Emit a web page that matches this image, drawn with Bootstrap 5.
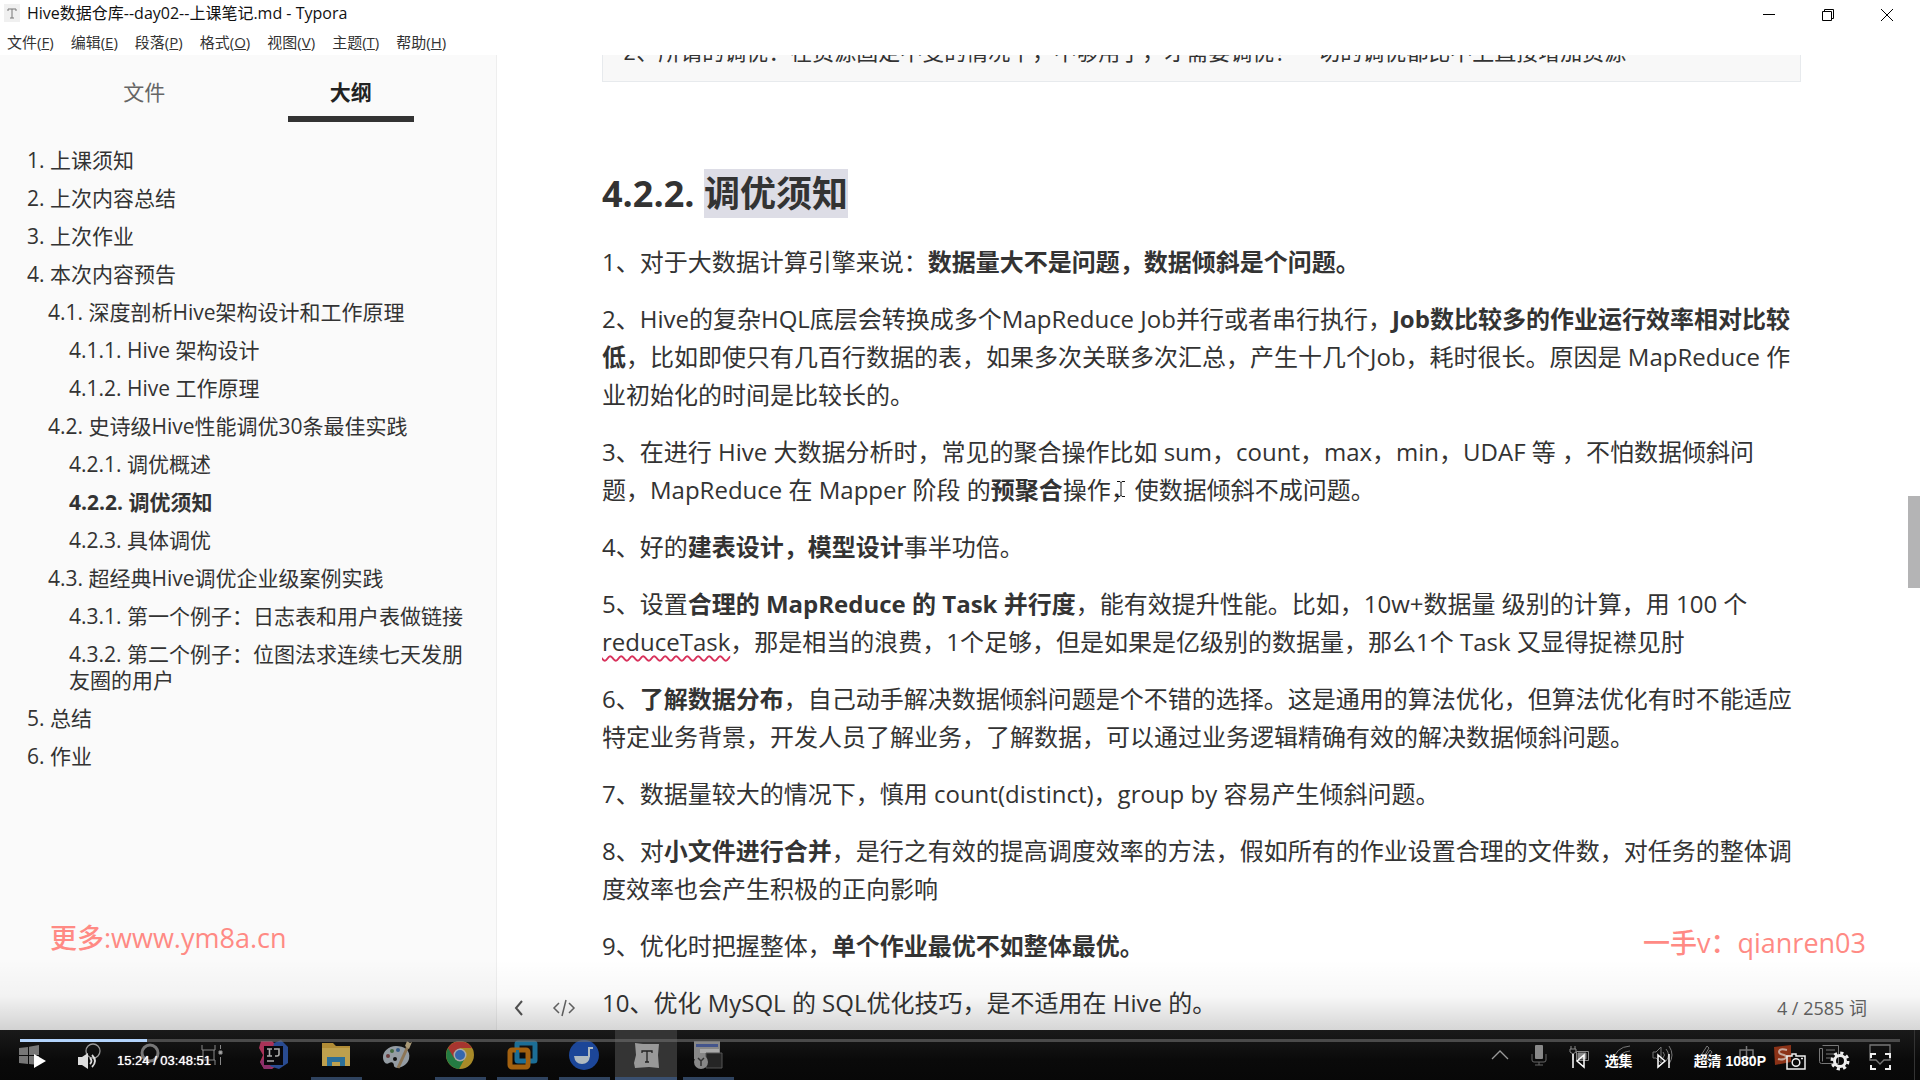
<!DOCTYPE html>
<html lang="zh-CN">
<head>
<meta charset="utf-8">
<meta name="viewport" content="width=device-width, initial-scale=1">
<title>Hive数据仓库--day02--上课笔记.md - Typora</title>
<link rel="stylesheet" href="https://cdn.jsdelivr.net/npm/bootstrap@5.3.0/dist/css/bootstrap.min.css">
<style>
  body { font-family: "Open Sans", "Noto Sans CJK SC", sans-serif; color: #333; background: #fff; }
  a, a:hover { color: inherit; text-decoration: none; }
  button { border: 0; background: none; padding: 0; color: inherit; }
  svg { display: block; overflow: visible; }
  .winbar { height: 30px; font-size: 16px; line-height: 27px; color: #111; padding-left: 4px; }
  .winbar .doc-title { margin-left: 7px; }
  .win-btn { width: 59px; height: 29px; display: grid; place-items: center; }
  .menus { height: 25px; padding-left: 7px; gap: 17px; font-size: 15px; line-height: 24px; color: #333; }
  .outline-pane { width: 497px; background: #fafafa; border-right: 1px solid #eee; }
  .pane-tabs { padding: 13px 42px 0 41px; font-size: 21px; line-height: 48px; }
  .pane-tabs button { border-bottom: 6px solid transparent; width: 126px; height: 54px; color: #666; }
  .pane-tabs button.active { border-color: #333; color: #222; font-weight: 700; }
  .toc { margin: 19px 30px 0 27px; font-size: 21px; line-height: 26px; }
  .toc li { padding: 6px 0; }
  .toc .lv2 { padding-left: 21px; }
  .toc .lv3 { padding-left: 42px; }
  .writing { padding: 0 119px 0 105px; font-size: 24px; line-height: 38px; }
  .writing p { margin: 0 0 19px; }
  .fence { height: 27px; background: #f8f8f8; border: 1px solid #e7eaed; border-top: 0; padding-left: 20px; font: 22px/30px "Liberation Mono", "Noto Sans CJK SC", monospace; }
  .fence div { margin-top: -15px; white-space: nowrap; }
  .writing h4 { margin: 85px 0 22px; font-size: 36px; line-height: 54px; font-weight: 700; }
  .picked { background: #dddde6; }
  .typo { text-decoration: underline wavy #d8315b 2px; text-underline-offset: 4px; }
  .thumb { right: 0; top: 441px; width: 12px; height: 92px; background: #b4b4b5; }
  .ibeam { left: 1117px; top: 481px; }
  .pane-foot { left: 497px; right: 53px; bottom: 55px; height: 34px; font-size: 18px; color: #666; padding-left: 17px; }
  .stamp { color: #ff8a84; font-size: 27px; line-height: 36px; font-weight: 500; white-space: nowrap; }
  .stamp-l { left: 50px; top: 920px; }
  .stamp-r { right: 54px; top: 925px; }
  .player { height: 120px; background: linear-gradient(rgba(0,0,0,0), rgba(0,0,0,.03) 30%, rgba(0,0,0,.17) 60%); }
  .deskbar { height: 50px; background: linear-gradient(#1a1a1a, #0a0a0a 60%, #080808); }
  .slot { width: 62px; display: grid; place-items: center; height: 50px; }
  .slot.first { width: 57px; }
  .slot.run { background: linear-gradient(#2f435f, #2f435f) center bottom / 51px 3px no-repeat; }
  .slot.now { background: linear-gradient(#3a5070, #3a5070) center bottom / 62px 3px no-repeat, #343434; }
  .tray > span { height: 50px; display: grid; place-items: center; }
  .w38 { width: 38px; } .w40 { width: 40px; } .w42 { width: 42px; } .w46 { width: 46px; } .w34 { width: 34px; } .w56 { width: 56px; }
  .desk-edge { width: 6px; margin-left: 11px; border-left: 1px solid #333; }
  .ctrls { height: 44px; padding: 6px 29px 0 33px; color: #fff; font: 14px/20px "Liberation Sans", "Noto Sans CJK SC", sans-serif; }
  .seek { left: 20px; right: 20px; bottom: 38px; height: 3px; border-radius: 0; background: rgba(110,110,110,.6); }
  .seek .progress-bar { background: #b3d4fc; }
  .clock { margin-left: 19px; font-size: 13px; text-shadow: 0 0 1px #fff; }
  .gap-a { margin-left: 20px; }
</style>
</head>
<body class="vh-100 overflow-hidden position-relative d-flex flex-column">
<header>
  <div class="winbar d-flex">
    <svg class="mt-1" width="16" height="18" viewBox="0 0 16 18"><rect width="16" height="18" fill="#f0f0f0"/><path d="M4 7V5h8v2M8 5v9M6 14h4" fill="none" stroke="#777"/></svg>
    <span class="doc-title me-auto">Hive数据仓库--day02--上课笔记.md - Typora</span>
    <button class="win-btn" aria-label="最小化"><svg width="12" height="12"><path d="M0 5.500h12" stroke="#000"/></svg></button>
    <button class="win-btn" aria-label="还原"><svg width="12" height="12" fill="none" stroke="#000"><path d="M.5 2.500h9v9h-9zM2.500 2.500v-2h9v9h-2"/></svg></button>
    <button class="win-btn me-1" aria-label="关闭"><svg width="12" height="12"><path d="M0 0l12 12M12 0L0 12" stroke="#000"/></svg></button>
  </div>
  <nav class="menus d-flex">
    <a href="#">文件(<u>F</u>)</a><a href="#">编辑(<u>E</u>)</a><a href="#">段落(<u>P</u>)</a><a href="#">格式(<u>O</u>)</a><a href="#">视图(<u>V</u>)</a><a href="#">主题(<u>T</u>)</a><a href="#">帮助(<u>H</u>)</a>
  </nav>
</header>
<div class="d-flex flex-grow-1 overflow-hidden position-relative">
  <aside class="outline-pane flex-shrink-0">
    <div class="pane-tabs d-flex justify-content-around"><button>文件</button><button class="active">大纲</button></div>
    <ul class="toc list-unstyled">
      <li><a href="#">1. 上课须知</a></li>
      <li><a href="#">2. 上次内容总结</a></li>
      <li><a href="#">3. 上次作业</a></li>
      <li><a href="#">4. 本次内容预告</a></li>
      <li class="lv2"><a href="#">4.1. 深度剖析Hive架构设计和工作原理</a></li>
      <li class="lv3"><a href="#">4.1.1. Hive 架构设计</a></li>
      <li class="lv3"><a href="#">4.1.2. Hive 工作原理</a></li>
      <li class="lv2"><a href="#">4.2. 史诗级Hive性能调优30条最佳实践</a></li>
      <li class="lv3"><a href="#">4.2.1. 调优概述</a></li>
      <li class="lv3 fw-bold"><a href="#">4.2.2. 调优须知</a></li>
      <li class="lv3"><a href="#">4.2.3. 具体调优</a></li>
      <li class="lv2"><a href="#">4.3. 超经典Hive调优企业级案例实践</a></li>
      <li class="lv3"><a href="#">4.3.1. 第一个例子：日志表和用户表做链接</a></li>
      <li class="lv3"><a href="#">4.3.2. 第二个例子：位图法求连续七天发朋友圈的用户</a></li>
      <li><a href="#">5. 总结</a></li>
      <li><a href="#">6. 作业</a></li>
    </ul>
  </aside>
  <main class="writing flex-grow-1">
    <div class="fence overflow-hidden"><div>2、所谓的调优：在资源固定不变的情况下，不够用了，才需要调优！一切的调优都比不上直接增加资源</div></div>
    <h4>4.2.2. <span class="picked">调优须知</span></h4>
    <p>1、对于大数据计算引擎来说：<b>数据量大不是问题，数据倾斜是个问题。</b></p>
    <p>2、Hive的复杂HQL底层会转换成多个MapReduce Job并行或者串行执行，<b>Job数比较多的作业运行效率相对比较低</b>，比如即使只有几百行数据的表，如果多次关联多次汇总，产生十几个Job，耗时很长。原因是 MapReduce 作业初始化的时间是比较长的。</p>
    <p>3、在进行 Hive 大数据分析时，常见的聚合操作比如 sum，count，max，min，UDAF 等 ，不怕数据倾斜问题，MapReduce 在 Mapper 阶段 的<b>预聚合</b>操作，使数据倾斜不成问题。</p>
    <p>4、好的<b>建表设计，模型设计</b>事半功倍。</p>
    <p>5、设置<b>合理的 MapReduce 的 Task 并行度</b>，能有效提升性能。比如，10w+数据量 级别的计算，用 100 个 <span class="typo">reduceTask</span>，那是相当的浪费，1个足够，但是如果是亿级别的数据量，那么1个 Task 又显得捉襟见肘</p>
    <p>6、<b>了解数据分布</b>，自己动手解决数据倾斜问题是个不错的选择。这是通用的算法优化，但算法优化有时不能适应特定业务背景，开发人员了解业务，了解数据，可以通过业务逻辑精确有效的解决数据倾斜问题。</p>
    <p>7、数据量较大的情况下，慎用 count(distinct)，group by 容易产生倾斜问题。</p>
    <p>8、对<b>小文件进行合并</b>，是行之有效的提高调度效率的方法，假如所有的作业设置合理的文件数，对任务的整体调度效率也会产生积极的正向影响</p>
    <p>9、优化时把握整体，<b>单个作业最优不如整体最优。</b></p>
    <p>10、优化 MySQL 的 SQL优化技巧，是不适用在 Hive 的。</p>
  </main>
  <div class="thumb position-absolute"></div>
</div>

<svg class="ibeam position-absolute" width="8" height="16" fill="none" stroke="#111"><path d="M0 .5h3l1 1 1-1h3M4 1v14M0 15.500h3l1-1 1 1h3"/></svg>
<div class="pane-foot position-absolute d-flex align-items-center">
  <button aria-label="收起侧栏"><svg width="10" height="16" fill="none" stroke="#555" stroke-width="2"><path d="M8 1L2 8l6 7"/></svg></button>
  <button class="ms-4 ps-1" aria-label="源代码模式"><svg width="24" height="16" fill="none" stroke="#666" stroke-width="1.500"><path d="M7 3L2 8l5 5M17 3l5 5-5 5M14 0l-4 16"/></svg></button>
  <span class="ms-auto">4 / 2585 词</span>
</div>
<div class="stamp stamp-l position-absolute">更多:www.ym8a.cn</div>
<div class="stamp stamp-r position-absolute">一手v：qianren03</div>

<footer class="player position-absolute bottom-0 start-0 end-0 d-flex flex-column justify-content-end">
  <div class="deskbar d-flex">
    <span class="slot first"><svg width="20" height="20" fill="#777"><path d="M0 3l9-1v8H0zM10 1.800L20 0v10H10zM0 11h9v8l-9-1zM10 11h10v9l-10-1z"/></svg></span>
    <span class="slot"><svg width="14" height="32" fill="none" stroke="#999" stroke-width="1.300"><circle cx="12" cy="12" r="7"/><path d="M7 17l-6 7"/></svg></span>
    <span class="slot"><svg width="20" height="24" fill="none" stroke="#777" stroke-width="3"><circle cx="10" cy="10" r="8"/></svg></span>
    <span class="slot"><svg width="20" height="20" fill="none" stroke="#888"><path d="M0 0v5h13V0M0 20v-5h13v5M1 5v10M12 5v10M18.500 0v4M18.500 12v8"/><path fill="#aaa" d="M17 6h3v3h-3z"/></svg></span>
    <span class="slot"><svg width="30" height="30"><path d="M2 1h11l4 4v21l-4 3H5L1 22l3-7-4-7z" fill="#a93358"/><path d="M15 3l7-3 7 7v16l-9 6-10-3z" fill="#294b91"/><path d="M1 22l6-5 6 12H5z" fill="#8b306b"/><rect x="5" y="6" width="19" height="19" fill="#08080c"/><path d="M8 9h5M10.500 9v7M8 16h5M15 9h5v5q0 2-2 2h-2M8 21h7" stroke="#aaa" stroke-width="1.600" fill="none"/></svg></span>
    <span class="slot run"><svg width="28" height="24"><path d="M0 0h11l3 3h14v20H0z" fill="#b18c36"/><path d="M0 5h28v18H0z" fill="#bea04d"/><path d="M5 23v-9h18v9h-5v-4h-8v4z" fill="#2b6f98"/></svg></span>
    <span class="slot"><svg width="30" height="28"><path d="M13 5C5 5 0 11 0 16c0 5 3 8 6 6s5 0 5 3c1 4 13 1 15-7 2-9-5-13-13-13z" fill="#949ca3"/><circle cx="5" cy="15" r="2" fill="#6a3a3a"/><circle cx="9" cy="10" r="2" fill="#446a42"/><circle cx="15" cy="9" r="2" fill="#355c8a"/><circle cx="12" cy="18" r="2" fill="#111"/><path d="M26 3L15 27" stroke="#8d7656" stroke-width="3"/><path d="M22 5l2-5 3 2 2-1-3 7z" fill="#a99977"/></svg></span>
    <span class="slot run"><svg width="28" height="28" viewBox="0 0 28 28"><circle cx="14" cy="14" r="14" fill="#a88a28"/><path d="M14 14L2 7A14 14 0 0 0 13 28l6-11z" fill="#247b42"/><path d="M2 7a14 14 0 0 1 24 0H14l-6 10z" fill="#a7352f"/><circle cx="14" cy="14" r="6.500" fill="#aaa"/><circle cx="14" cy="14" r="5" fill="#3567ad"/></svg></span>
    <span class="slot run"><svg width="30" height="30" fill="none" stroke-width="5"><rect x="10" y="3" width="18" height="18" rx="1" stroke="#1c6e96"/><rect x="3" y="10" width="18" height="17" rx="2" stroke="#a36110"/><path d="M10.500 10v11H19" stroke="#1c6e96" stroke-width="3"/></svg></span>
    <span class="slot run"><svg width="30" height="30"><circle cx="15" cy="15" r="15" fill="#1c4698"/><path d="M5 16h16q-1 8-8 8t-8-8z" fill="#b0bac0"/><path d="M20 17V8h4" stroke="#b0bac0" stroke-width="2" fill="none"/></svg></span>
    <span class="slot now"><svg width="27" height="27"><path d="M2 1l8 1 16 0-1 11 1 13-10-1-14 1-1-5 2-8z" fill="#999"/><path d="M9 11V9h10v2M14 9v11M12 20h4" fill="none" stroke="#222" stroke-width="1.300"/></svg></span>
    <span class="slot run"><svg width="28" height="28"><path d="M0 0h26v18H0z" fill="#888"/><path d="M2 3h22v3H2z" fill="#44558c"/><path d="M6 8h19v4H6z" fill="#aaa"/><path d="M12 12h16v15H12z" fill="#252525" stroke="#555"/><circle cx="7" cy="21" r="7" fill="#888"/><path d="M4 17l3 3 3-3M7 19v6" stroke="#333" fill="none" stroke-width="1.500"/></svg></span>
    <div class="tray d-flex ms-auto">
      <span class="w38"><svg width="16" height="9" fill="none" stroke="#999" stroke-width="1.300"><path d="M0 8l8-8 8 8"/></svg></span>
      <span class="w40"><svg width="14" height="20"><rect x="3" width="8" height="14" rx="1" fill="#888"/><path d="M0 9v6q0 2 2 2h10q2 0 2-2V9M7 17v3M3 20h8" stroke="#666" fill="none"/></svg></span>
      <span class="w42"><svg width="20" height="18" fill="none" stroke="#888"><path d="M1 0v3M5 0v3M0 3h6v3L3 8 0 6zM3 8v6M6.500 5.500h12v9h-12z"/><path d="M8 7h8v6H8z" fill="#888"/></svg></span>
      <span class="w40"><svg width="18" height="22" fill="none" stroke="#777"><path d="M1 18Q3 3 18 2M5 18Q7 8 18 7M9 18q1-6 9-7"/></svg></span>
      <span class="w42"><svg width="20" height="18" fill="none" stroke="#777"><path d="M1 6h3l5-5v16l-5-5H1zM11 6q3 3 0 6M14 3q5 6 0 12M17 0q6 9 0 18"/></svg></span>
      <span class="w46"><svg width="16" height="20" fill="none" stroke="#777"><path d="M2 12L9 1l2 2-7 12zM6 14l6-9 2 2-6 9M2 17q6-4 8 0t5-4"/></svg></span>
      <span class="w34"><svg width="15" height="18" fill="none" stroke="#777" stroke-width="1.500"><path d="M1 4h13v8H1zM7.500 0v18"/></svg></span>
      <span class="w38"><svg width="19" height="20"><path d="M1 2l17-2v17L2 20z" fill="#8b3217"/><path d="M14 5q-8-2-8 2 0 2 5 3 5 2 0 4-3 1-6 0" fill="none" stroke="#c5a79b" stroke-width="2"/></svg></span>
      <span class="w56"><svg width="20" height="21" fill="none" stroke="#777"><path d="M3.500.5h16v18H2.500q-2 0-2-2V3.500h3v13M7 5h9M7 9h9M7 13h9"/></svg></span>
      <span class="w46"><svg width="20" height="20" fill="none" stroke="#777" stroke-width="1.300"><path d="M0 0h20v15h-6l-4 4-4-4H0z"/></svg></span>
      <span class="desk-edge"></span>
    </div>
  </div>
  <div class="seek progress position-absolute"><div class="progress-bar" style="width:6.750%"></div></div>
  <div class="ctrls position-absolute bottom-0 start-0 end-0 d-flex align-items-center">
    <button aria-label="播放"><svg width="13" height="14"><path d="M1 0l12 7-12 7z" fill="#fff"/></svg></button>
    <button class="ms-4 ps-1" aria-label="音量"><svg class="ms-1" width="20" height="16"><path d="M0 4h4l6-4v16l-6-4H0z" fill="#ddd"/><path d="M12 5q3 3 0 6M14 2q6 6 0 12" fill="none" stroke="#ddd" stroke-width="1.800"/></svg></button>
    <span class="clock me-auto">15:24 / 03:48:51</span>
    <button aria-label="上一集"><svg width="13" height="14" fill="none" stroke="#fff" stroke-width="1.500"><path d="M1 0v14M12 1L5 7l7 6z"/></svg></button>
    <button class="fw-bold gap-a">选集</button>
    <button class="ms-4" aria-label="下一集"><svg width="13" height="14" fill="none" stroke="#fff" stroke-width="1.500"><path d="M12 0v14M1 1l7 6-7 6z"/></svg></button>
    <button class="fw-bold ms-4">超清 1080P</button>
    <button class="gap-a" aria-label="截图"><svg width="20" height="17" fill="none" stroke="#eee" stroke-width="1.500"><path d="M1 3h5V1h4v2h9v13H1z"/><circle cx="10" cy="9.500" r="3.800"/><path d="M15 5.500h2"/></svg></button>
    <button class="ms-4" aria-label="设置"><svg width="20" height="20" viewBox="-10 -10 20 20"><circle r="5.500" fill="none" stroke="#eee" stroke-width="3"/><circle r="8" fill="none" stroke="#eee" stroke-width="3" stroke-dasharray="3.140 3.140"/></svg></button>
    <button class="gap-a" aria-label="全屏"><svg width="21" height="17" fill="none" stroke="#eee" stroke-width="2"><path d="M1 5V1h5M15 1h5v4M20 12v4h-5M6 16H1v-4"/></svg></button>
  </div>
</footer>
<script src="https://cdn.jsdelivr.net/npm/bootstrap@5.3.0/dist/js/bootstrap.bundle.min.js"></script>
</body>
</html>
